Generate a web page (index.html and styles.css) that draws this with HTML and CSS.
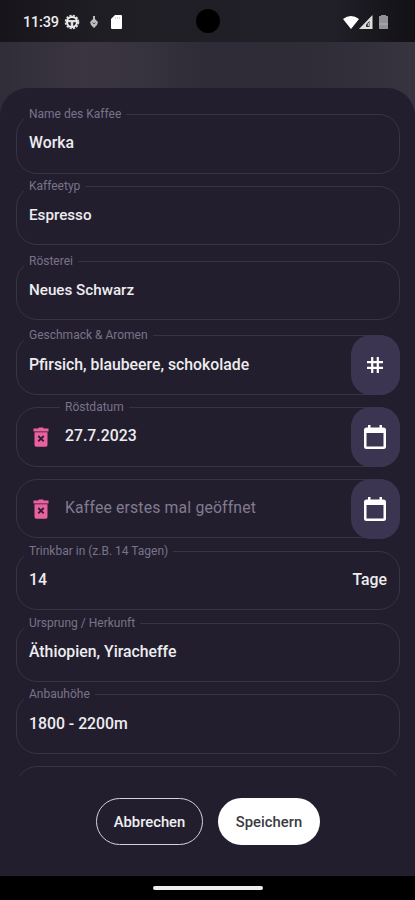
FILE: index.html
```html
<!DOCTYPE html>
<html lang="de">
<head>
    <meta charset="UTF-8">
    <meta name="viewport" content="width=device-width, initial-scale=1.0">
    <title>Kaffee bearbeiten</title>
    <link rel="stylesheet" href="styles.css">
</head>
<body>
    <div class="status-bar">
        <span class="time">11:39</span>
        <svg class="icon-gear" width="16" height="16" viewBox="0 0 16 16">
            <circle cx="8" cy="8" r="6.4" fill="none" stroke="#ddd" stroke-width="1.8" stroke-dasharray="2.2 1.15"/>
            <circle cx="8" cy="8" r="5" fill="none" stroke="#eee" stroke-width="2"/>
            <path d="M4 6h8v2.200H9.200V12H6.800V8.200H4z" fill="#ddd"/>
        </svg>
        <svg class="icon-debug" width="10" height="12" viewBox="0 0 10 12">
            <path d="M4 0h2v3l3 3-1 3-3 3-3-3-1-3 3-3z" fill="#bbb"/>
            <path d="M3.500 6.500L5 8l1.500-1.500" fill="none" stroke="#555" stroke-width="1"/>
        </svg>
        <svg class="icon-sd" width="11" height="14" viewBox="0 0 11 14">
            <path d="M4 0h6q1 0 1 1v12q0 1-1 1H1q-1 0-1-1V4z" fill="#fff"/>
            <path d="M4.500 2v2M6.500 2v2M8.500 2v2" stroke="#ccc" stroke-width=".8"/>
        </svg>
        <span class="camera"></span>
        <svg class="icon-wifi" width="16" height="13" viewBox="0 0 16 13">
            <path d="M0 3Q8-3 16 3L8 13z" fill="#fff"/>
        </svg>
        <svg class="icon-signal" width="14" height="14" viewBox="0 0 14 14">
            <path d="M13.500 0v14H0z" fill="#ddd"/>
            <path d="M10.500 6v6H7V9.500z" fill="#333"/>
            <path d="M9.300 8v3" stroke="#ddd" stroke-width="1"/>
        </svg>
        <svg class="icon-battery" width="9" height="14" viewBox="0 0 9 14">
            <path d="M2 0h5v1h2v13H0V1h2z" fill="#929196"/>
            <path d="M0 9h9" stroke="#b5b4b8"/>
        </svg>
    </div>

    <div class="sheet">
        <div class="fields">
            <div class="field">
                <label>Name des Kaffee</label>
                <span class="value">Worka</span>
            </div>
            <div class="field type">
                <label>Kaffeetyp</label>
                <span class="value narrow">Espresso</span>
            </div>
            <div class="field roastery">
                <label>Rösterei</label>
                <span class="value narrow">Neues Schwarz</span>
            </div>
            <div class="field">
                <label>Geschmack &amp; Aromen</label>
                <span class="value">Pfirsich, blaubeere, schokolade</span>
                <button class="action">
                    <svg width="18" height="18" viewBox="0 0 18 18">
                        <path d="M6.200 1v16M11.800 1v16M1 6.200h16M1 11.800h16" stroke="#fff" stroke-width="2.200"/>
                    </svg>
                </button>
            </div>
            <div class="field date">
                <label>Röstdatum</label>
                <svg class="trash" width="16" height="20" viewBox="0 0 16 20">
                    <path d="M.5 1.500H5L6 .5h4l1 1h4.500v3H.5zM1.500 5.200h13V18q0 1.800-1.800 1.800H3.300Q1.500 19.800 1.500 18z" fill="#ea619f"/>
                    <path d="M5.300 9l5.400 5.400M10.700 9l-5.400 5.400" stroke="#2b1c35" stroke-width="1.800"/>
                </svg>
                <span class="value">27.7.2023</span>
                <button class="action">
                    <svg width="22" height="24" viewBox="0 0 22 24">
                        <path d="M4 0h2.500v2.500h9V0H18v2.500h1.500Q22 2.500 22 5v16.500Q22 24 19.500 24h-17Q0 24 0 21.500V5Q0 2.500 2.500 2.500H4zM2.500 8v13.500h17V8z" fill="#fff"/>
                    </svg>
                </button>
            </div>
            <div class="field date">
                <svg class="trash" width="16" height="20" viewBox="0 0 16 20">
                    <path d="M.5 1.500H5L6 .5h4l1 1h4.500v3H.5zM1.500 5.200h13V18q0 1.800-1.800 1.800H3.300Q1.500 19.800 1.500 18z" fill="#ea619f"/>
                    <path d="M5.300 9l5.400 5.400M10.700 9l-5.400 5.400" stroke="#2b1c35" stroke-width="1.800"/>
                </svg>
                <span class="placeholder">Kaffee erstes mal geöffnet</span>
                <button class="action">
                    <svg width="22" height="24" viewBox="0 0 22 24">
                        <path d="M4 0h2.500v2.500h9V0H18v2.500h1.500Q22 2.500 22 5v16.500Q22 24 19.500 24h-17Q0 24 0 21.500V5Q0 2.500 2.500 2.500H4zM2.500 8v13.500h17V8z" fill="#fff"/>
                    </svg>
                </button>
            </div>
            <div class="field">
                <label>Trinkbar in (z.B. 14 Tagen)</label>
                <span class="value">14</span>
                <span class="unit">Tage</span>
            </div>
            <div class="field">
                <label>Ursprung / Herkunft</label>
                <span class="value">Äthiopien, Yiracheffe</span>
            </div>
            <div class="field">
                <label>Anbauhöhe</label>
                <span class="value">1800 - 2200m</span>
            </div>
            <div class="field"></div>
        </div>
        <div class="buttons">
            <button class="btn cancel">Abbrechen</button>
            <button class="btn save">Speichern</button>
        </div>
    </div>

    <div class="nav-bar"><span class="handle"></span></div>
</body>
</html>
```
FILE: styles.css
```css
* {
    box-sizing: border-box;
}

body {
    margin: 0;
    height: 900px;
    display: flex;
    flex-direction: column;
    overflow: hidden;
    font-family: Roboto, sans-serif;
    color: #ededf0;
    background: linear-gradient(90deg, #302d38, #3a3541 20%, #37333e 35%, #2f2b37 48%, #2f2b37 75%, #37333f);
}

button {
    border: none;
    padding: 0;
    font-family: inherit;
}

svg {
    display: block;
    flex-shrink: 0;
}

.status-bar {
    position: relative;
    height: 42px;
    flex-shrink: 0;
    display: flex;
    align-items: center;
    padding: 2px 27px 0 23px;
    background: linear-gradient(90deg, #17151b, #201e25 25%, #211f27 80%, #121116);
}

.time {
    width: 41px;
    font-size: 14.5px;
    font-weight: 500;
    letter-spacing: -0.2px;
    white-space: nowrap;
}

.icon-debug {
    margin-left: 9px;
}

.icon-sd {
    margin-left: 12px;
}

.camera {
    position: absolute;
    left: 196px;
    top: 9px;
    width: 24px;
    height: 24px;
    border-radius: 50%;
    background: #000;
}

.icon-wifi {
    margin-left: auto;
}

.icon-battery {
    margin-left: 6px;
}

.sheet {
    height: 788px;
    flex-shrink: 0;
    margin-top: 46px;
    background: #231e2e;
    border-radius: 28px 28px 0 0;
}

.fields {
    height: 688px;
    padding: 26.2px 15px 0 16px;
    overflow: hidden;
}

.field {
    position: relative;
    display: flex;
    align-items: center;
    height: 59.5px;
    margin-bottom: 12.3px;
    padding: 0 0 2px 12px;
    border: 1px solid #393443;
    border-radius: 21px;
}

.type {
    margin-bottom: 15.3px;
}

.roastery {
    margin-bottom: 15.1px;
}

.field label {
    position: absolute;
    top: -9px;
    left: 7px;
    height: 16px;
    padding: 0 5px;
    font-size: 12px;
    line-height: 16px;
    white-space: nowrap;
    color: #79738a;
    background: #231e2e;
}

.date label {
    left: 43px;
}

.value,
.unit {
    font-size: 15.8px;
    font-weight: 500;
    white-space: nowrap;
}

.narrow {
    font-size: 15.2px;
}

.placeholder {
    font-size: 15.8px;
    letter-spacing: 0.15px;
    white-space: nowrap;
    color: #817b90;
}

.trash {
    margin: 2px 16px 0 4px;
}

.unit {
    margin-left: auto;
    padding-right: 12px;
}

.action {
    width: 49px;
    height: 60px;
    margin: -1px -1px -3px auto;
    padding-right: 2px;
    display: flex;
    align-items: center;
    justify-content: center;
    background: #3c3551;
    border-radius: 20px;
}

.buttons {
    display: flex;
    justify-content: center;
    gap: 15px;
    padding: 22px 0 0 1px;
}

.btn {
    height: 47px;
    border-radius: 24px;
    font-size: 14.8px;
    font-weight: 500;
}

.cancel {
    width: 107px;
    border: 1.5px solid #d5d3d8;
    color: #f0f0f2;
    background: none;
}

.save {
    width: 102px;
    color: #3b3a3f;
    background: #fff;
}

.nav-bar {
    height: 24px;
    display: flex;
    justify-content: center;
    align-items: center;
    background: #000;
}

.handle {
    width: 110px;
    height: 4px;
    border-radius: 2px;
    background: #eee;
}
```
